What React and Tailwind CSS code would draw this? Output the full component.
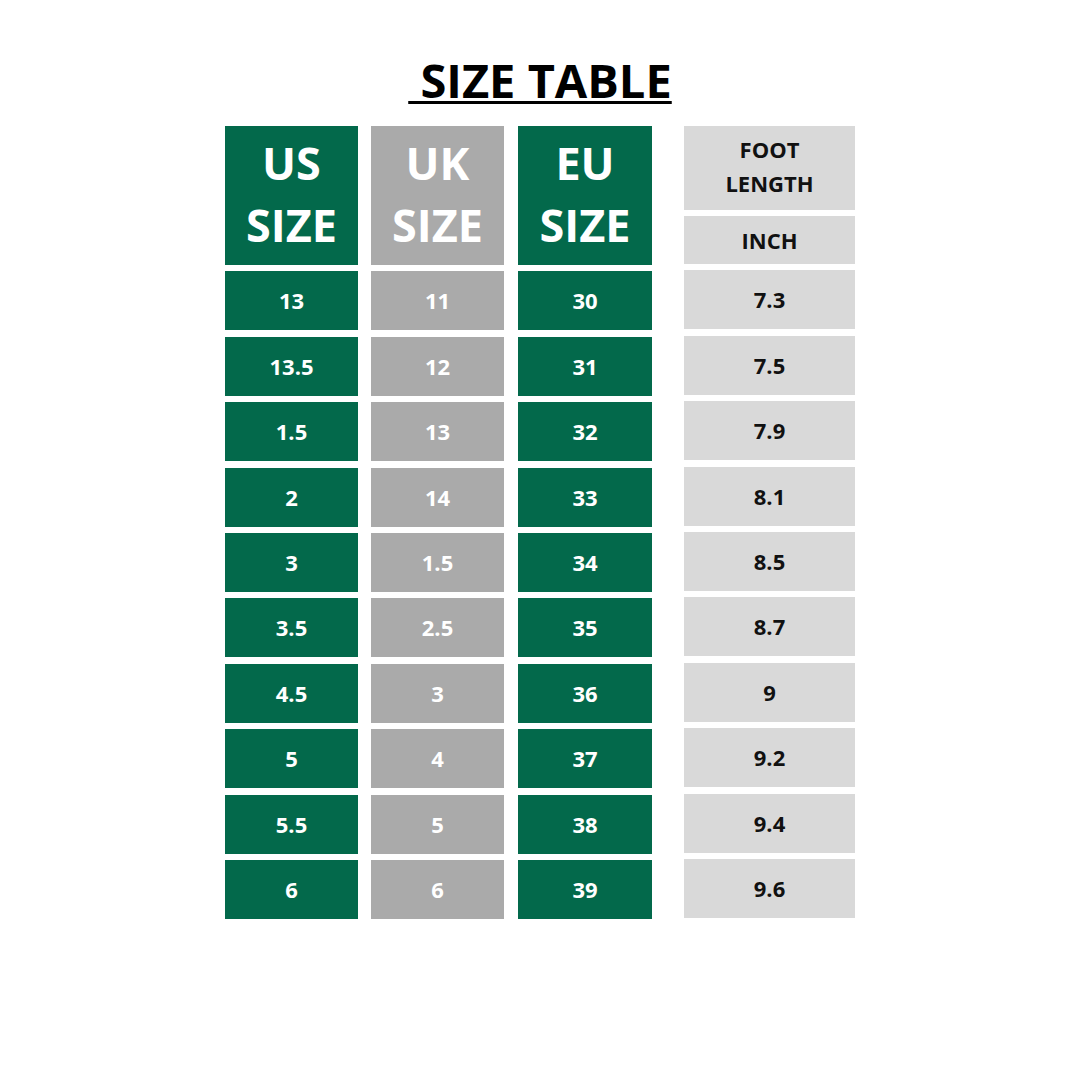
import React from "react";

const rows = [
  ["13", "11", "30", "7.3"],
  ["13.5", "12", "31", "7.5"],
  ["1.5", "13", "32", "7.9"],
  ["2", "14", "33", "8.1"],
  ["3", "1.5", "34", "8.5"],
  ["3.5", "2.5", "35", "8.7"],
  ["4.5", "3", "36", "9"],
  ["5", "4", "37", "9.2"],
  ["5.5", "5", "38", "9.4"],
  ["6", "6", "39", "9.6"],
];

const SizeColumn = ({ label, values, bg, width }) => (
  <div className={`flex flex-col gap-[6.4px] ${width}`}>
    <div
      className={`flex h-[139px] flex-col items-center justify-center pb-1 text-[45px] font-bold leading-[62px] text-white ${bg}`}
    >
      <span>{label}</span>
      <span>SIZE</span>
    </div>
    {values.map((v, i) => (
      <div key={i} className={`flex h-[59px] items-center justify-center text-[22px] font-bold text-white ${bg}`}>
        {v}
      </div>
    ))}
  </div>
);

export default function App() {
  return (
    <div
      className="flex h-[1080px] w-[1080px] flex-col items-center bg-white"
      style={{ fontFamily: '"Open Sans", "Liberation Sans", sans-serif' }}
    >
      <h1 className="mt-[56px] whitespace-pre text-[47px] font-bold leading-[48px] text-black underline decoration-[3px] underline-offset-[3px]">
        {" SIZE TABLE"}
      </h1>

      <div className="mt-[22px] flex">
        <SizeColumn label="US" values={rows.map((r) => r[0])} bg="bg-[#03694b]" width="w-[133px]" />
        <div className="ml-[13px]">
          <SizeColumn label="UK" values={rows.map((r) => r[1])} bg="bg-[#aaaaaa]" width="w-[133px]" />
        </div>
        <div className="ml-[14px]">
          <SizeColumn label="EU" values={rows.map((r) => r[2])} bg="bg-[#03694b]" width="w-[134px]" />
        </div>

        <div className="ml-[32px] flex w-[171px] flex-col gap-[6.4px]">
          <div className="flex h-[84px] flex-col items-center justify-center bg-[#d9d9d9] pb-1 text-[22px] font-bold leading-[34px] text-[#111]">
            <span>FOOT</span>
            <span>LENGTH</span>
          </div>
          <div className="-mt-[0.4px] flex h-[48px] items-center justify-center bg-[#d9d9d9] text-[22px] font-bold text-[#111]">
            INCH
          </div>
          {rows.map((r, i) => (
            <div key={i} className="flex h-[59px] items-center justify-center bg-[#d9d9d9] text-[22px] font-bold text-[#111]">
              {r[3]}
            </div>
          ))}
        </div>
      </div>
    </div>
  );
}
